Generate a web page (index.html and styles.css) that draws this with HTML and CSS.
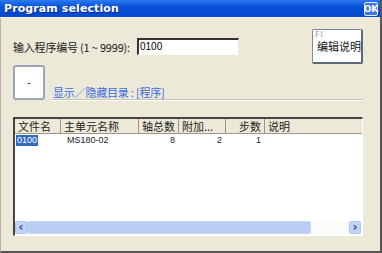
FILE: index.html
```html
<!DOCTYPE html>
<html>
<head>
<meta charset="utf-8">
<link rel="stylesheet" href="styles.css">
</head>
<body>
<div class="window">
  <div class="titlebar">
    <span class="title">Program selection</span>
    <span class="okbtn">OK</span>
  </div>
  <div class="content">
    <div class="row1">
      <span class="label">输入程序编号 (1 ~ 9999):</span>
      <div class="input">0100</div>
      <div class="fbtn"><span class="fkey">F1</span><span class="ftext">编辑说明</span></div>
    </div>
    <div class="row2">
      <div class="minus">-</div>
      <div class="linkwrap">
        <span class="link">显示／隐藏目录 : [程序]</span>
      </div>
    </div>
    <div class="list">
      <div class="head">
        <div class="hc c1">文件名</div>
        <div class="hc c2">主单元名称</div>
        <div class="hc c3 r">轴总数</div>
        <div class="hc c4">附加...</div>
        <div class="hc c5 r">步数</div>
        <div class="hc c6">说明</div>
      </div>
      <div class="rowd">
        <div class="dc c1"><span class="sel">0100</span></div>
        <div class="dc c2">MS180-02</div>
        <div class="dc c3 r">8</div>
        <div class="dc c4 r">2</div>
        <div class="dc c5 r">1</div>
        <div class="dc c6"></div>
      </div>
      <div class="spacer"></div>
      <div class="hscroll">
        <div class="arrow">&#8249;</div>
        <div class="thumb"></div>
        <div class="track"></div>
        <div class="arrow">&#8250;</div>
      </div>
    </div>
  </div>
</div>
</body>
</html>
```
FILE: styles.css
```css
html, body { margin: 0; padding: 0; }
body { width: 382px; height: 253px; overflow: hidden; background: #ece9d8; font-family: "DejaVu Sans", "Noto Sans CJK SC", sans-serif; }
.window { width: 382px; height: 253px; box-sizing: border-box; border-right: 2px solid #555; border-bottom: 2px solid #555; border-left: 1px solid #b8b4a4; background: #ece9d8; display: flex; flex-direction: column; }
.titlebar { height: 17px; background: linear-gradient(#2a7af0, #0852d8 40%, #0448cc); display: flex; align-items: center; justify-content: space-between; padding: 0 2px 0 4px; border-bottom: 1px solid #f4f2ea; box-sizing: content-box; margin-left: -1px; }
.title { color: #fff; font-family: "DejaVu Sans", sans-serif; font-weight: bold; font-size: 11px; letter-spacing: 0.1px; text-shadow: 1px 1px 0 #0a2a80; }
.okbtn { width: 14px; height: 14px; box-sizing: border-box; border: 1px solid #e8eeff; border-radius: 2px; background: #3c78e8; color: #fff; font-weight: bold; font-size: 9px; display: flex; align-items: center; justify-content: center; font-family: "DejaVu Sans", sans-serif; }
.content { padding: 11px 17px 0 12px; display: flex; flex-direction: column; }
.row1 { display: flex; align-items: flex-start; height: 35px; }
.label { font-family: "Noto Sans CJK SC", sans-serif; font-size: 11px; margin-top: 10px; width: 124px; color: #222; white-space: nowrap; letter-spacing: -0.2px; }
.input { margin-top: 9px; width: 102px; height: 17px; box-sizing: border-box; background: #fff; border-top: 2px solid #333; border-left: 2px solid #333; border-right: 1px solid #ece9d8; border-bottom: 1px solid #fff; font-family: "Liberation Sans", sans-serif; font-size: 10px; line-height: 14px; padding-left: 1px; }
.fbtn { margin-left: auto; width: 51px; height: 35px; box-sizing: border-box; background: #fff; border: 1px solid #7a8a9a; border-right: 2px solid #5a6a78; border-bottom: 2px solid #5a6a78; border-radius: 2px; display: flex; flex-direction: column; padding: 0 0 0 2px; }
.fkey { font-family: "Liberation Serif", serif; font-size: 8px; color: #9a9aaa; line-height: 9px; }
.ftext { font-family: "Noto Sans CJK SC", sans-serif; font-size: 11px; line-height: 14px; color: #111; padding-left: 2px; }
.row2 { display: flex; align-items: flex-end; margin-top: 1px; height: 35px; }
.minus { width: 32px; height: 35px; box-sizing: border-box; background: #fff; border: 2px solid #9aa6b4; border-radius: 3px; display: flex; align-items: center; justify-content: center; font-size: 10px; color: #222; font-family: "DejaVu Sans", sans-serif; }
.linkwrap { flex: 1; margin-left: 8px; border-bottom: 1px solid #c8c4b4; box-shadow: 0 1px 0 #fff; height: 17px; }
.link { font-family: "Noto Sans CJK SC", sans-serif; font-size: 11px; color: #3a6ae0; line-height: 14px; letter-spacing: -0.2px; }
.list { margin-top: 17px; width: 350px; height: 119px; box-sizing: border-box; background: #fff; border-top: 2px solid #444; border-left: 2px solid #444; border-right: 1px solid #fff; border-bottom: 1px solid #fff; display: flex; flex-direction: column; }
.head { display: flex; height: 14px; background: #ece9d8; border-bottom: 1px solid #9a968a; }
.hc { box-sizing: border-box; font-family: "Noto Sans CJK SC", sans-serif; font-size: 11px; line-height: 14px; height: 14px; color: #222; padding: 0 3px; border-right: 1px solid #9a968a; white-space: nowrap; overflow: visible; }
.c1 { width: 46px; }
.c2 { width: 78px; }
.c3 { width: 40px; }
.c4 { width: 47px; overflow: hidden; }
.c5 { width: 39px; }
.c6 { flex: 1; border-right: none; }
.r { text-align: right; }
.rowd { display: flex; height: 12px; margin-top: 0; }
.dc { box-sizing: border-box; font-family: "Liberation Sans", sans-serif; font-size: 9px; line-height: 12px; padding: 0 4px 0 6px; color: #222; white-space: nowrap; }
.c1.dc { padding-left: 1px; }
.sel { background: #316ac5; color: #fff; padding: 0 1px; display: inline-block; line-height: 11px; }
.spacer { flex: 1; }
.hscroll { display: flex; height: 13px; margin: 0 1px 1px 0; }
.arrow { width: 12px; height: 13px; box-sizing: border-box; background: #c4d4f4; border: 1px solid #b0c4ec; border-radius: 2px; color: #2a48a8; font-weight: bold; font-size: 12px; line-height: 10px; text-align: center; font-family: "DejaVu Sans", sans-serif; }
.thumb { width: 284px; background: #b8cdf4; border: 1px solid #c4d4f4; border-radius: 2px; box-sizing: border-box; }
.track { flex: 1; background: #fbfbf8; }
```
